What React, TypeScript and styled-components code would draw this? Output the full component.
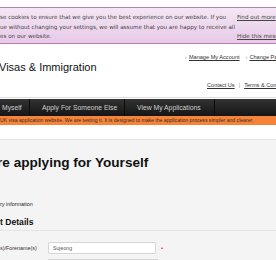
import React from "react";
import styled, { createGlobalStyle } from "styled-components";

const Global = createGlobalStyle`
  html, body { margin: 0; padding: 0; background: #ffffff; }
  body { width: 276px; height: 260px; overflow: hidden; font-family: "Liberation Sans", Arial, sans-serif; }
  #root { width: 276px; }
`;

const Page = styled.div`
  display: flex;
  flex-direction: column;
  width: 276px;
  overflow: hidden;
`;

const CookieBar = styled.div`
  margin-top: 7px;
  height: 35px;
  border-top: 1px solid #b77bb7;
  border-bottom: 1px solid #b77bb7;
  background: linear-gradient(#f3e7f3, #e8c9e8);
  display: flex;
  justify-content: space-between;
  font-family: "DejaVu Sans", Verdana, sans-serif;
  font-size: 5.6px;
  color: #444;
`;

const CookieText = styled.p`
  margin: 0;
  padding: 5px 0 0 0;
  width: 226px;
  line-height: 9.5px;
  white-space: nowrap;
`;

const CookieLinks = styled.div`
  display: flex;
  flex-direction: column;
  gap: 9.5px;
  padding-top: 5px;
  width: 39px;
  line-height: 9.5px;
  white-space: nowrap;
`;

const SmallLink = styled.a`
  color: #444;
  text-decoration: underline;
`;

const Header = styled.header`
  height: 53px;
  border-bottom: 1px solid #dddddd;
  display: flex;
  justify-content: space-between;
`;

const Brand = styled.div`
  font-size: 11px;
  color: #111;
  padding-top: 17px;
  margin-left: -1px;
  white-space: nowrap;
`;

const HeaderLinks = styled.div`
  display: flex;
  flex-direction: column;
  align-items: flex-end;
  gap: 22px;
  padding-top: 10px;
  font-size: 5.6px;
  white-space: nowrap;
`;

const LinkRow = styled.div<{ $indent: number }>`
  display: flex;
  gap: 6px;
  width: ${(p) => 276 - p.$indent}px;
  color: #666;
`;

const Chevron = styled.span`
  color: #999;
  margin-right: 2px;
`;

const HeaderLink = styled.a`
  color: #333;
  text-decoration: underline;
`;

const Pipe = styled.span`
  color: #999;
  margin: 0 -2px;
`;

const Nav = styled.nav`
  margin-top: 1px;
  height: 17px;
  background: linear-gradient(#333333, #151515);
  display: flex;
  align-items: center;
  font-size: 6.8px;
  color: #cfcfcf;
  white-space: nowrap;
`;

const NavItem = styled.div<{ $w: number; $pl: number }>`
  width: ${(p) => p.$w}px;
  padding-left: ${(p) => p.$pl}px;
  height: 17px;
  line-height: 17px;
  border-right: 1px solid #0c0c0c;
  box-sizing: border-box;
`;

const Beta = styled.div`
  height: 9px;
  background: #f5843a;
  color: #3a2a20;
  font-size: 5.1px;
  line-height: 9px;
  white-space: nowrap;
`;

const WhiteGap = styled.div`
  height: 14px;
  border-bottom: 1px solid #e4e4e4;
`;

const Content = styled.main`
  background: #f4f4f4;
  height: 120px;
  display: flex;
  flex-direction: column;
`;

const Title = styled.h1`
  margin: 15px 0 0 -3px;
  font-size: 13.6px;
  font-weight: bold;
  color: #111;
  line-height: 16px;
  white-space: nowrap;
`;

const Note = styled.p`
  margin: 29px 0 0 0;
  font-size: 5.4px;
  color: #222;
  line-height: 8px;
`;

const SectionTitle = styled.h2`
  margin: 9px 0 0 0;
  font-size: 8.6px;
  font-weight: bold;
  color: #111;
  line-height: 11px;
  padding-bottom: 2px;
  border-bottom: 1px solid #e6e6e6;
`;

const FieldRow = styled.div`
  display: flex;
  align-items: center;
  margin-top: 11px;
  height: 12px;
`;

const Label = styled.label`
  width: 48px;
  font-size: 5.4px;
  color: #333;
  white-space: nowrap;
`;

const Input = styled.div`
  width: 108px;
  height: 12px;
  box-sizing: border-box;
  border: 1px solid #d6d6d6;
  border-radius: 1px;
  background: #fff;
  font-size: 5.2px;
  color: #555;
  line-height: 10px;
  padding-left: 4px;
`;

const Required = styled.span`
  color: #d33;
  font-size: 6px;
  margin-left: 5px;
  line-height: 6px;
`;

const NextInput = styled.div`
  margin: 5px 0 0 48px;
  width: 108px;
  height: 12px;
  border: 1px solid #d6d6d6;
  background: #fff;
`;

export default function App() {
  return (
    <Page>
      <Global />
      <CookieBar>
        <CookieText>
          se cookies to ensure that we give you the best experience on our website. If you
          <br />
          ue without changing your settings, we will assume that you are happy to receive all
          <br />
          es on our website.
        </CookieText>
        <CookieLinks>
          <SmallLink>Find out more</SmallLink>
          <SmallLink>Hide this message</SmallLink>
        </CookieLinks>
      </CookieBar>
      <Header>
        <Brand>Visas &amp; Immigration</Brand>
        <HeaderLinks>
          <LinkRow $indent={185}>
            <span>
              <Chevron>›</Chevron>
              <HeaderLink>Manage My Account</HeaderLink>
            </span>
            <span>
              <Chevron>›</Chevron>
              <HeaderLink>Change Password</HeaderLink>
            </span>
          </LinkRow>
          <LinkRow $indent={207}>
            <HeaderLink>Contact Us</HeaderLink>
            <Pipe>|</Pipe>
            <HeaderLink>Terms &amp; Conditions</HeaderLink>
          </LinkRow>
        </HeaderLinks>
      </Header>
      <Nav>
        <NavItem $w={30} $pl={2}>Myself</NavItem>
        <NavItem $w={95} $pl={12}>Apply For Someone Else</NavItem>
        <NavItem $w={90} $pl={12}>View My Applications</NavItem>
      </Nav>
      <Beta>
        UK visa application website. We are testing it. It is designed to make the application process simpler and clearer.
      </Beta>
      <WhiteGap />
      <Content>
        <Title>re applying for Yourself</Title>
        <Note>ry information</Note>
        <SectionTitle>t Details</SectionTitle>
        <FieldRow>
          <Label>s)/Forename(s)</Label>
          <Input>Sujeong</Input>
          <Required>•</Required>
        </FieldRow>
        <NextInput />
      </Content>
    </Page>
  );
}
